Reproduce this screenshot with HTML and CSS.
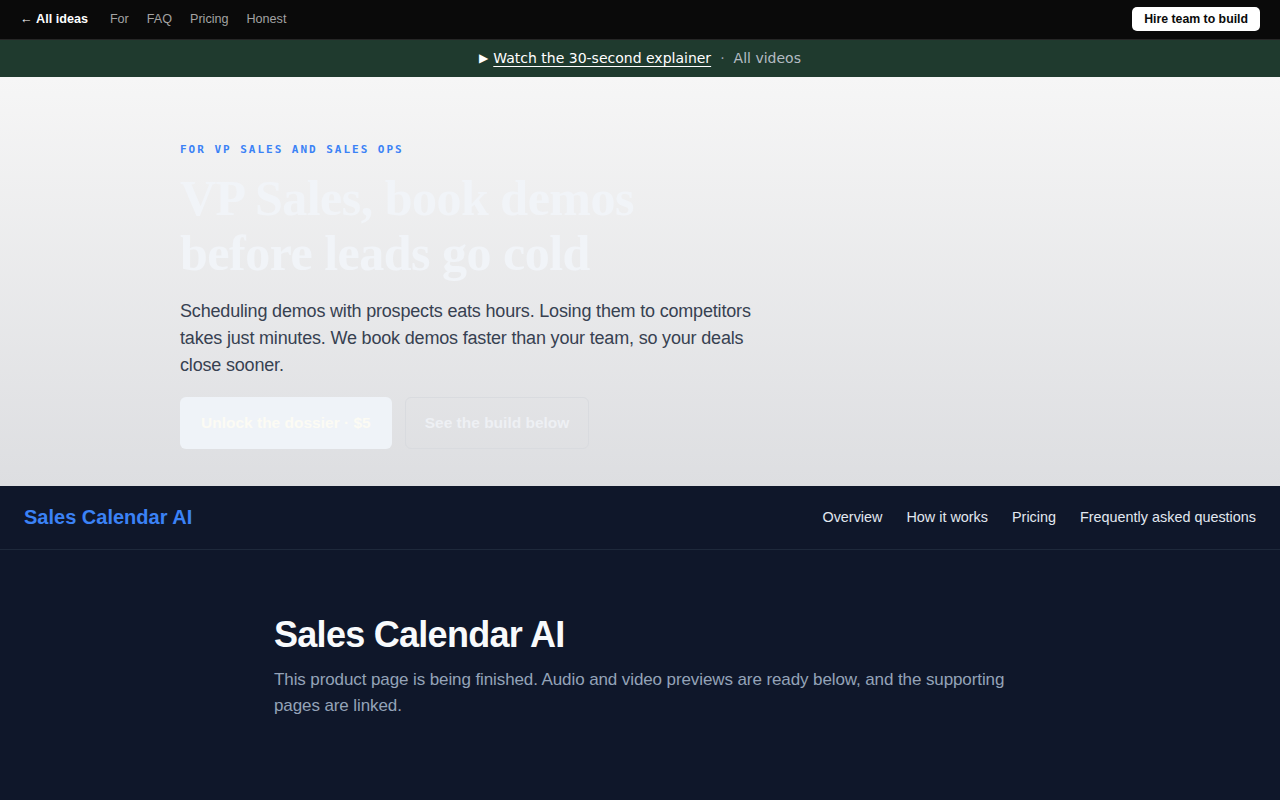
FILE: index.html
```html
<!DOCTYPE html>
<html lang="en">
<head>
    <meta charset="UTF-8" />
    <meta name="viewport" content="width=device-width, initial-scale=1.0"/>
    <title>Sales Calendar AI</title>
    <link rel="stylesheet" href="styles.css">
</head>
<body>
    <header class="topbar">
        <nav class="topbar-links">
            <a class="back" href="#">&larr; <b>All ideas</b></a>
            <a href="#">For</a>
            <a href="#">FAQ</a>
            <a href="#">Pricing</a>
            <a href="#">Honest</a>
        </nav>
        <a class="hire" href="#">Hire team to build</a>
    </header>

    <div class="explainer">
        <span class="play">&#9654;</span>
        <a class="watch" href="#">Watch the 30-second explainer</a>
        <span class="dot">&middot;</span>
        <a class="videos" href="#">All videos</a>
    </div>

    <section class="hero">
        <div class="hero-inner">
            <p class="eyebrow">For VP Sales and Sales Ops</p>
            <h1 class="hero-title">VP Sales, book demos before leads go cold</h1>
            <p class="hero-lead">Scheduling demos with prospects eats hours. Losing them to competitors takes just minutes. We book demos faster than your team, so your deals close sooner.</p>
            <div class="hero-actions">
                <a class="btn btn-primary" href="#">Unlock the dossier &middot; $5</a>
                <a class="btn btn-ghost" href="#">See the build below</a>
            </div>
        </div>
    </section>

    <section class="product">
        <nav class="product-nav">
            <a class="brand" href="#">Sales Calendar AI</a>
            <div class="product-links">
                <a href="#">Overview</a>
                <a href="#">How it works</a>
                <a href="#">Pricing</a>
                <a href="#">Frequently asked questions</a>
            </div>
        </nav>
        <div class="product-body">
            <h2>Sales Calendar AI</h2>
            <p>This product page is being finished. Audio and video previews are ready below, and the supporting pages are linked.</p>
        </div>
    </section>
</body>
</html>
```

FILE: styles.css
```css
* {
    box-sizing: border-box;
}

body {
    margin: 0;
    font-family: "Liberation Sans", Arial, sans-serif;
    background: #0f172a;
}

a {
    text-decoration: none;
    color: inherit;
}

/* top strip */
.topbar {
    height: 40px;
    background: #0a0a0a;
    border-bottom: 1px solid #262626;
    display: flex;
    align-items: center;
    justify-content: space-between;
    padding: 0 20px 2px;
    font-size: 12.6px;
}

.topbar-links {
    display: flex;
    align-items: center;
    gap: 18px;
    color: #a3a3a3;
}

.topbar-links .back {
    color: #fff;
    margin-right: 4px;
}

.hire {
    background: #fff;
    color: #0a0a0a;
    font-weight: 700;
    font-size: 12.3px;
    padding: 5px 12px;
    border-radius: 5px;
}

/* explainer banner */
.explainer {
    height: 37px;
    background: #1f3a2e;
    display: flex;
    align-items: center;
    justify-content: center;
    padding-bottom: 2px;
    font-family: "DejaVu Sans", sans-serif;
    font-size: 14px;
    color: #fff;
}

.play {
    font-size: 12px;
    margin-right: 5px;
}

.watch {
    text-decoration: underline;
    text-underline-offset: 3px;
}

.dot {
    color: #9ca3af;
    margin: 0 9px;
}

.videos {
    color: #b4bcc3;
}

/* hero */
.hero {
    height: 409px;
    background: linear-gradient(to bottom, #f6f6f6, #dddee1);
    padding: 66px 180px 0;
}

.hero-inner {
    max-width: 600px;
}

.eyebrow {
    margin: 0;
    font-family: "DejaVu Sans Mono", monospace;
    font-weight: 700;
    font-size: 11px;
    letter-spacing: 0.18em;
    text-transform: uppercase;
    color: #3b82f6;
}

.hero-title {
    margin: 15px 0 0;
    font-family: "Liberation Serif", "Times New Roman", serif;
    font-size: 50px;
    line-height: 55px;
    font-weight: 700;
    letter-spacing: -0.01em;
    color: #f1f4f8;
    max-width: 500px;
}

.hero-lead {
    margin: 17px 0 0;
    font-size: 18px;
    line-height: 27px;
    letter-spacing: -0.01em;
    color: #374151;
}

.hero-actions {
    display: flex;
    gap: 13px;
    margin-top: 18px;
}

.btn {
    height: 52px;
    display: flex;
    align-items: center;
    padding: 0 19px;
    font-size: 15.5px;
    font-weight: 700;
    border-radius: 6px;
}

.btn-primary {
    background: #eff3f8;
    color: #fcfbf4;
    padding: 0 21px;
}

.btn-ghost {
    border: 1px solid #d9dbdf;
    color: #eef0f4;
}

/* product section */
.product-nav {
    height: 64px;
    display: flex;
    align-items: center;
    justify-content: space-between;
    padding: 0 24px 1px;
    border-bottom: 1px solid #1e293b;
}

.brand {
    color: #3b82f6;
    font-size: 20px;
    font-weight: 700;
}

.product-links {
    display: flex;
    gap: 24px;
    font-size: 14.4px;
    color: #e2e8f0;
}

.product-body {
    width: 732px;
    margin: 0 auto;
    padding-top: 63px;
}

.product-body h2 {
    margin: 0;
    font-size: 36px;
    line-height: 44px;
    letter-spacing: -0.02em;
    color: #f8fafc;
}

.product-body p {
    margin: 10px 0 0;
    font-size: 17px;
    line-height: 26px;
    letter-spacing: -0.1px;
    color: #94a3b8;
}
```
